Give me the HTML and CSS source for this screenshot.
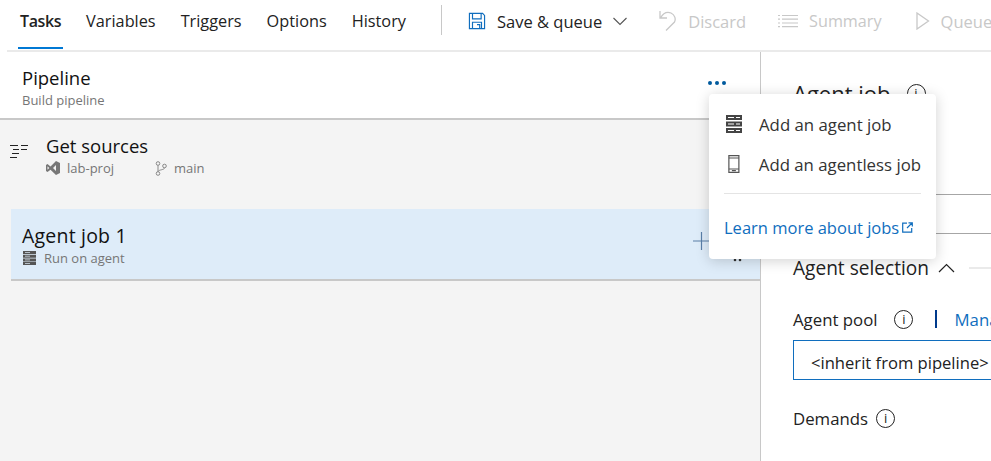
FILE: index.html
```html
<!DOCTYPE html>
<html lang="en">

<head>
    <meta charset="UTF-8">
    <title>Pipeline</title>
    <link rel="stylesheet" href="styles.css">
</head>

<body>
    <div class="topbar">
        <div class="tabs">
            <span class="tab active">Tasks</span>
            <span class="tab">Variables</span>
            <span class="tab">Triggers</span>
            <span class="tab">Options</span>
            <span class="tab">History</span>
        </div>
        <div class="sep"></div>
        <div class="cmd save">
            <svg width="18" height="18" viewBox="0 0 20 20" fill="none" stroke="#106ebe" stroke-width="1.3"><path d="M1.6 1.6h14.6l2.200 2.200v14.600H1.600z"/><path d="M5 1.600v6h9.600v-6M5 18.400v-7h10v7M10 14h3v4.400"/></svg>
            <span>Save &amp; queue</span>
            <svg class="chev" width="14" height="9" viewBox="0 0 14 9" fill="none" stroke="#555" stroke-width="1.100"><path d="M.5 1l6.500 6.500L13.500 1"/></svg>
        </div>
        <div class="cmd off">
            <svg width="18" height="22" viewBox="0 0 18 22" fill="none" stroke="#c8c8c8" stroke-width="1.300"><path d="M1 1v7h7M1.500 8C4 3.500 8 1.500 12 3c4 2 5 6 3.500 9L7 20.500"/></svg>
            <span>Discard</span>
        </div>
        <div class="cmd off">
            <svg width="20" height="14" viewBox="0 0 20 14" fill="none" stroke="#c8c8c8" stroke-width="1.200"><path d="M4 1.500h16M4 5.200h16M4 9h16M4 12.700h16M0 1.500h2M0 5.200h2M0 9h2M0 12.700h2"/></svg>
            <span class="summary">Summary</span>
        </div>
        <div class="cmd off queue">
            <svg width="14" height="18" viewBox="0 0 14 18" fill="none" stroke="#c8c8c8" stroke-width="1.300"><path d="M1 1l11.500 8L1 17z"/></svg>
            <span>Queue</span>
        </div>
    </div>

    <div class="main">
        <div class="left">
            <div class="pipeline">
                <div>
                    <div class="title">Pipeline</div>
                    <div class="sub build">Build pipeline</div>
                </div>
                <div class="dots"><i></i><i></i><i></i></div>
            </div>
            <div class="list">
                <div class="sources">
                    <svg class="src-ico" width="18" height="15" viewBox="0 0 18 15" fill="none" stroke="#222" stroke-width="1.200"><path d="M0 1.500h8M11 1.500h7M3 5.500h6M11 5.500h6M2 9.500h7M0 13.500h7"/></svg>
                    <div>
                        <div class="title">Get sources</div>
                        <div class="meta">
                            <svg width="14" height="14" viewBox="0 0 14 14" fill="#777"><path d="M10 0l4 2v10l-4 2-5.500-5.300L1.500 11 0 10V4l1.500-.9 3 2.300zM10 4L7 7l3 3zM1.500 5.300v3.400L3.200 7z"/></svg>
                            <span class="sub proj">lab-proj</span>
                            <svg width="12" height="15" viewBox="0 0 12 15" fill="none" stroke="#888" stroke-width="1"><circle cx="3" cy="2.500" r="1.800"/><circle cx="3" cy="12.500" r="1.800"/><circle cx="9.500" cy="5" r="1.800"/><path d="M3 4.300v6.400M9.500 6.800C9.500 9 4 8.500 3 10.500"/></svg>
                            <span class="sub">main</span>
                        </div>
                    </div>
                </div>
                <div class="job">
                    <div>
                        <div class="title job-title">Agent job 1</div>
                        <div class="meta wide">
                            <svg width="13" height="14" viewBox="0 0 13 14" fill="#555"><path d="M0 0h13v3H0zM0 3.700h13v3H0zM0 7.400h13v3H0zM0 11h13v3H0z"/><path d="M2 1.500h5M2 5.200h5M2 8.900h5M2 12.500h5" stroke="#deecf9" stroke-width=".7"/></svg>
                            <span class="sub">Run on agent</span>
                        </div>
                    </div>
                    <div class="job-actions">
                        <svg class="plus" width="17" height="18" viewBox="0 0 17 18" stroke="#5a7fa8" stroke-width="1.200"><path d="M8.500 0v18M0 9h17"/></svg>
                        <svg class="grip" width="9" height="4" viewBox="0 0 9 4" fill="#333"><circle cx="2" cy="2" r="1.300"/><circle cx="7" cy="2" r="1.300"/></svg>
                    </div>
                </div>
            </div>
        </div>

        <div class="right">
            <div class="heading">
                <span>Agent job</span>
                <span class="info">i</span>
            </div>
            <div class="field-line"></div>
            <div class="field-line second"></div>
            <div class="section">
                <span>Agent selection</span>
                <svg width="17" height="10" viewBox="0 0 17 10" fill="none" stroke="#222" stroke-width="1.200"><path d="M1 9l7.500-7.500L16 9"/></svg>
                <div class="rule"></div>
            </div>
            <div class="label-row">
                <span>Agent pool</span>
                <span class="info">i</span>
                <span class="bar"></span>
                <span class="manage">Manage</span>
            </div>
            <div class="select">&lt;inherit from pipeline&gt;</div>
            <div class="label-row demands">
                <span>Demands</span>
                <span class="info">i</span>
            </div>
        </div>
    </div>

    <div class="menu">
        <div class="menu-item">
            <svg width="16" height="18" viewBox="0 0 16 18" fill="#444"><path d="M0 0h16v5H0zM0 6.500h16v5H0zM0 13h16v5H0z"/><path d="M2 2.500h6M10 2.500h4M2 9h6M10 9h4M2 15.500h6M10 15.500h4" stroke="#fff" stroke-width="1"/></svg>
            <span>Add an agent job</span>
        </div>
        <div class="menu-item">
            <svg width="16" height="18" viewBox="0 0 12 18" fill="none" stroke="#555" stroke-width="1.200"><path d="M1 .6h10v16.800H1z"/><path d="M1 3h10M1 14h10M4 15.700h4"/></svg>
            <span>Add an agentless job</span>
        </div>
        <div class="menu-sep"></div>
        <div class="learn">
            <span>Learn more about jobs</span>
            <svg width="11" height="11" viewBox="0 0 11 11" fill="none" stroke="#106ebe" stroke-width="1.200"><path d="M5 1.200H.7v9h9V6M5 6l5-5M6.500.8h3.800v3.800"/></svg>
        </div>
    </div>
</body>

</html>
```

FILE: styles.css
```css
body {
    margin: 0;
    height: 461px;
    overflow: hidden;
    position: relative;
    background-color: #fff;
    font-family: "Open Sans", "Noto Sans", sans-serif;
    font-size: 16.5px;
    color: #222;
}

.topbar {
    display: flex;
    align-items: flex-start;
    height: 50px;
    margin-left: 7px;
    border-bottom: 2px solid #eaeaea;
    white-space: nowrap;
    overflow: hidden;
}

.tabs {
    display: flex;
    flex: none;
    padding-left: 11px;
    gap: 21px;
}

.tab {
    display: flex;
    align-items: center;
    height: 49px;
    padding: 0 2px 7px;
    box-sizing: border-box;
    font-size: 16.3px;
}

.tab.active {
    font-size: 16px;
    letter-spacing: -0.4px;
    font-weight: 600;
    box-shadow: inset 0 -2px 0 #0078d4;
}

.sep {
    flex: none;
    width: 1px;
    height: 30px;
    margin: 5px 0 0 33px;
    background-color: #c8c8c8;
}

.cmd {
    display: flex;
    align-items: center;
    flex: none;
    gap: 11px;
    height: 42px;
    margin-left: 32px;
}

.cmd.save {
    margin-left: 26px;
}

.cmd.queue {
    margin-left: 34px;
}

.cmd.off {
    color: #c8c8c8;
}

.summary {
    font-size: 16.2px;
}

.main {
    display: flex;
    height: 409px;
}

.left {
    width: 760px;
    flex: none;
    border-right: 1px solid #c8c8c8;
    display: flex;
    flex-direction: column;
    background-color: #f4f4f4;
}

.pipeline {
    display: flex;
    justify-content: space-between;
    height: 68px;
    padding: 14px 34px 0 22px;
    box-sizing: border-box;
    background-color: #fff;
    border-bottom: 2px solid #c8c8c8;
}

.title {
    font-size: 18.5px;
    line-height: 24px;
    color: #111;
}

.job-title {
    font-size: 19.5px;
    letter-spacing: 0.2px;
}

.sub {
    font-size: 13px;
    line-height: 16px;
    color: #767676;
}

.build {
    margin-top: 2px;
}

.dots {
    display: flex;
    gap: 3px;
    margin-top: 15px;
}

.dots i {
    width: 4px;
    height: 4px;
    border-radius: 50%;
    background-color: #005a9e;
}

.sources {
    display: flex;
    height: 89px;
    padding: 14px 0 0 10px;
    box-sizing: border-box;
    gap: 18px;
}

.src-ico {
    margin-top: 10px;
}

.meta {
    display: flex;
    align-items: center;
    gap: 7px;
    margin-top: 2px;
}

.meta.wide {
    gap: 8px;
    padding-left: 1px;
}

.proj {
    margin-right: 34px;
}

.job {
    display: flex;
    justify-content: space-between;
    margin-left: 11px;
    height: 72px;
    padding: 15px 18px 0 11px;
    box-sizing: border-box;
    background-color: #deecf9;
    border-bottom: 2px solid #c8c8c8;
}

.job-actions {
    display: flex;
    align-items: flex-start;
    gap: 23px;
}

.plus {
    margin-top: 8px;
}

.grip {
    margin-top: 34px;
}

.right {
    flex: 1;
    min-width: 0;
    padding-left: 32px;
    position: relative;
    white-space: nowrap;
    overflow: hidden;
}

.heading {
    display: flex;
    align-items: center;
    gap: 16px;
    padding-top: 27px;
    font-size: 22px;
    line-height: 28px;
}

.info {
    display: inline-flex;
    flex: none;
    align-items: center;
    justify-content: center;
    width: 19px;
    height: 19px;
    border: 1px solid #222;
    border-radius: 50%;
    box-sizing: border-box;
    font-size: 13px;
    line-height: 1;
}

.field-line {
    height: 1px;
    margin-top: 87px;
    background-color: #a6a6a6;
}

.field-line.second {
    margin-top: 38px;
}

.section {
    display: flex;
    align-items: center;
    gap: 9px;
    margin-top: 21px;
    height: 26px;
    font-size: 19.1px;
}

.rule {
    flex: 1;
    height: 2px;
    margin-left: 5px;
    background-color: #eaeaea;
}

.label-row {
    display: flex;
    align-items: center;
    gap: 17px;
    margin-top: 26px;
    height: 24px;
    font-size: 16.8px;
}

.bar {
    flex: none;
    width: 2px;
    height: 18px;
    margin-left: 5px;
    background-color: #003a8c;
}

.manage {
    flex: none;
    color: #106ebe;
}

.select {
    width: 260px;
    height: 40px;
    margin-top: 9px;
    padding-left: 17px;
    line-height: 44px;
    box-sizing: border-box;
    border: 1px solid #106ebe;
    font-size: 16.6px;
}

.label-row.demands {
    gap: 8px;
    margin-top: 26px;
}

.menu {
    position: absolute;
    left: 709px;
    top: 94px;
    width: 227px;
    height: 165px;
    padding: 10px 15px 0;
    box-sizing: border-box;
    background-color: #fff;
    border-radius: 4px;
    box-shadow: 0 2px 14px rgba(0, 0, 0, 0.18);
    color: #333;
    white-space: nowrap;
    font-size: 16.8px;
}

.menu-item {
    display: flex;
    align-items: center;
    gap: 17px;
    height: 40px;
    padding-left: 2px;
}

.menu-sep {
    height: 1px;
    margin-top: 9px;
    background-color: #e4e4e4;
}

.learn {
    display: flex;
    align-items: center;
    gap: 3px;
    margin-top: 22px;
    font-size: 16.5px;
    color: #106ebe;
}
```
